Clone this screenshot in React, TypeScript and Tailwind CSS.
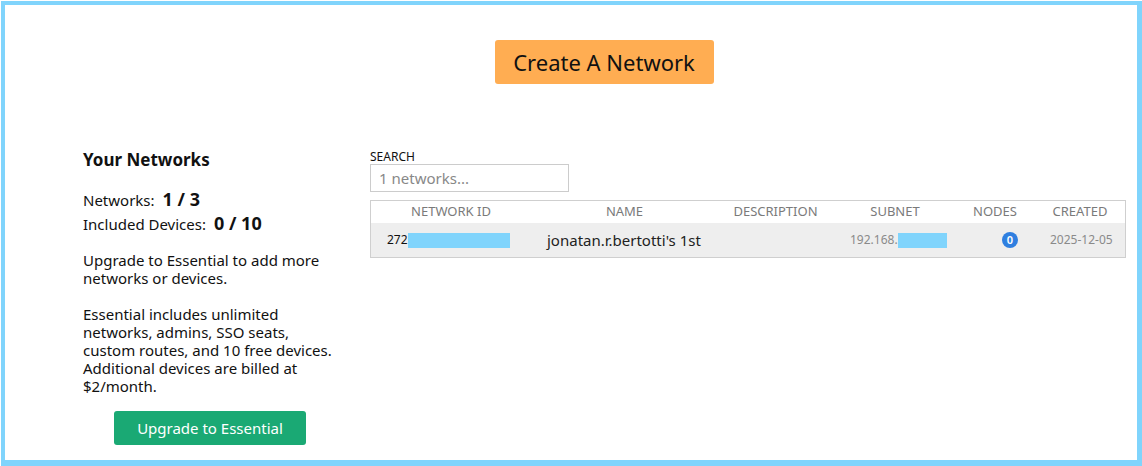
const FONT = "font-['Segoe_UI','Noto_Sans',sans-serif]";

const COLS = 'grid grid-cols-[160px_187px_115px_124px_76px_94px]';

function Redacted({ className }: { className: string }) {
  return <span className={`inline-block bg-[#80d4fc] ${className}`} />;
}

function NetworksTable() {
  return (
    <div className="w-[756px] border border-[#cfcfcf]">
      <div className={`${COLS} h-[22px] items-center text-center text-[13px] uppercase text-[#7a7a7a]`}>
        <div>Network ID</div>
        <div>Name</div>
        <div>Description</div>
        <div>Subnet</div>
        <div>Nodes</div>
        <div>Created</div>
      </div>
      <div className={`${COLS} h-[34px] items-center bg-[#eeeeee]`}>
        <div className="flex items-center pl-[16px] text-[12px] text-[#111]">
          272
          <Redacted className="h-[15px] w-[102px]" />
        </div>
        <div className="pl-[16px] text-[15px] text-[#222]">jonatan.r.bertotti's 1st</div>
        <div />
        <div className="flex items-center pl-[17px] text-[12px] text-[#8a8a8a]">
          192.168.
          <Redacted className="h-[15px] w-[49px]" />
        </div>
        <div className="flex justify-end pr-[15px]">
          <span className="flex h-[16px] w-[16px] items-center justify-center rounded-full bg-[#2f7fe0] text-[11px] font-semibold text-white">
            0
          </span>
        </div>
        <div className="pl-[17px] text-[12px] text-[#8a8a8a]">2025-12-05</div>
      </div>
    </div>
  );
}

export default function App() {
  return (
    <div className={`${FONT} h-[466px] w-[1142px] bg-white pl-px pt-px`}>
      <div className="h-[465px] w-[1141px] border-[4px] border-b-[6px] border-r-[5px] border-[#80d4fc] bg-white">
        <div className="flex justify-center pl-[66px] pt-[35px]">
          <button className="h-[44px] w-[219px] rounded-[3px] bg-[#ffad52] text-[22px] text-[#111]">
            Create A Network
          </button>
        </div>

        <div className="mt-[63px] flex">
          {/* sidebar */}
          <div className="ml-[78px] w-[250px] pt-[2px] text-[15px] leading-[18px] text-[#111]">
            <h2 className="text-[17px] font-bold leading-[22px]">Your Networks</h2>
            <div className="mt-[19px] flex items-baseline gap-[8px]">
              <span>Networks:</span>
              <span className="text-[18px] font-bold">1 / 3</span>
            </div>
            <div className="mt-[5px] flex items-baseline gap-[8px]">
              <span>Included Devices:</span>
              <span className="text-[18px] font-bold">0 / 10</span>
            </div>
            <p className="mt-[18px]">
              Upgrade to Essential to add more
              <br />
              networks or devices.
            </p>
            <p className="mt-[18px]">
              Essential includes unlimited
              <br />
              networks, admins, SSO seats,
              <br />
              custom routes, and 10 free devices.
              <br />
              Additional devices are billed at
              <br />
              $2/month.
            </p>
            <div className="mt-[16px] flex justify-center pl-[4px]">
              <button className="h-[34px] w-[192px] rounded-[3px] bg-[#1aa974] text-[15px] text-white">
                Upgrade to Essential
              </button>
            </div>
          </div>

          {/* main */}
          <div className="ml-[37px] pt-[3px]">
            <label className="block text-[12px] uppercase leading-[14px] text-[#111]">Search</label>
            <input
              className="h-[28px] w-[199px] border border-[#cccccc] px-[8px] text-[15px] outline-none placeholder:text-[#888]"
              placeholder="1 networks..."
            />
            <div className="mt-[8px]">
              <NetworksTable />
            </div>
          </div>
        </div>
      </div>
    </div>
  );
}
